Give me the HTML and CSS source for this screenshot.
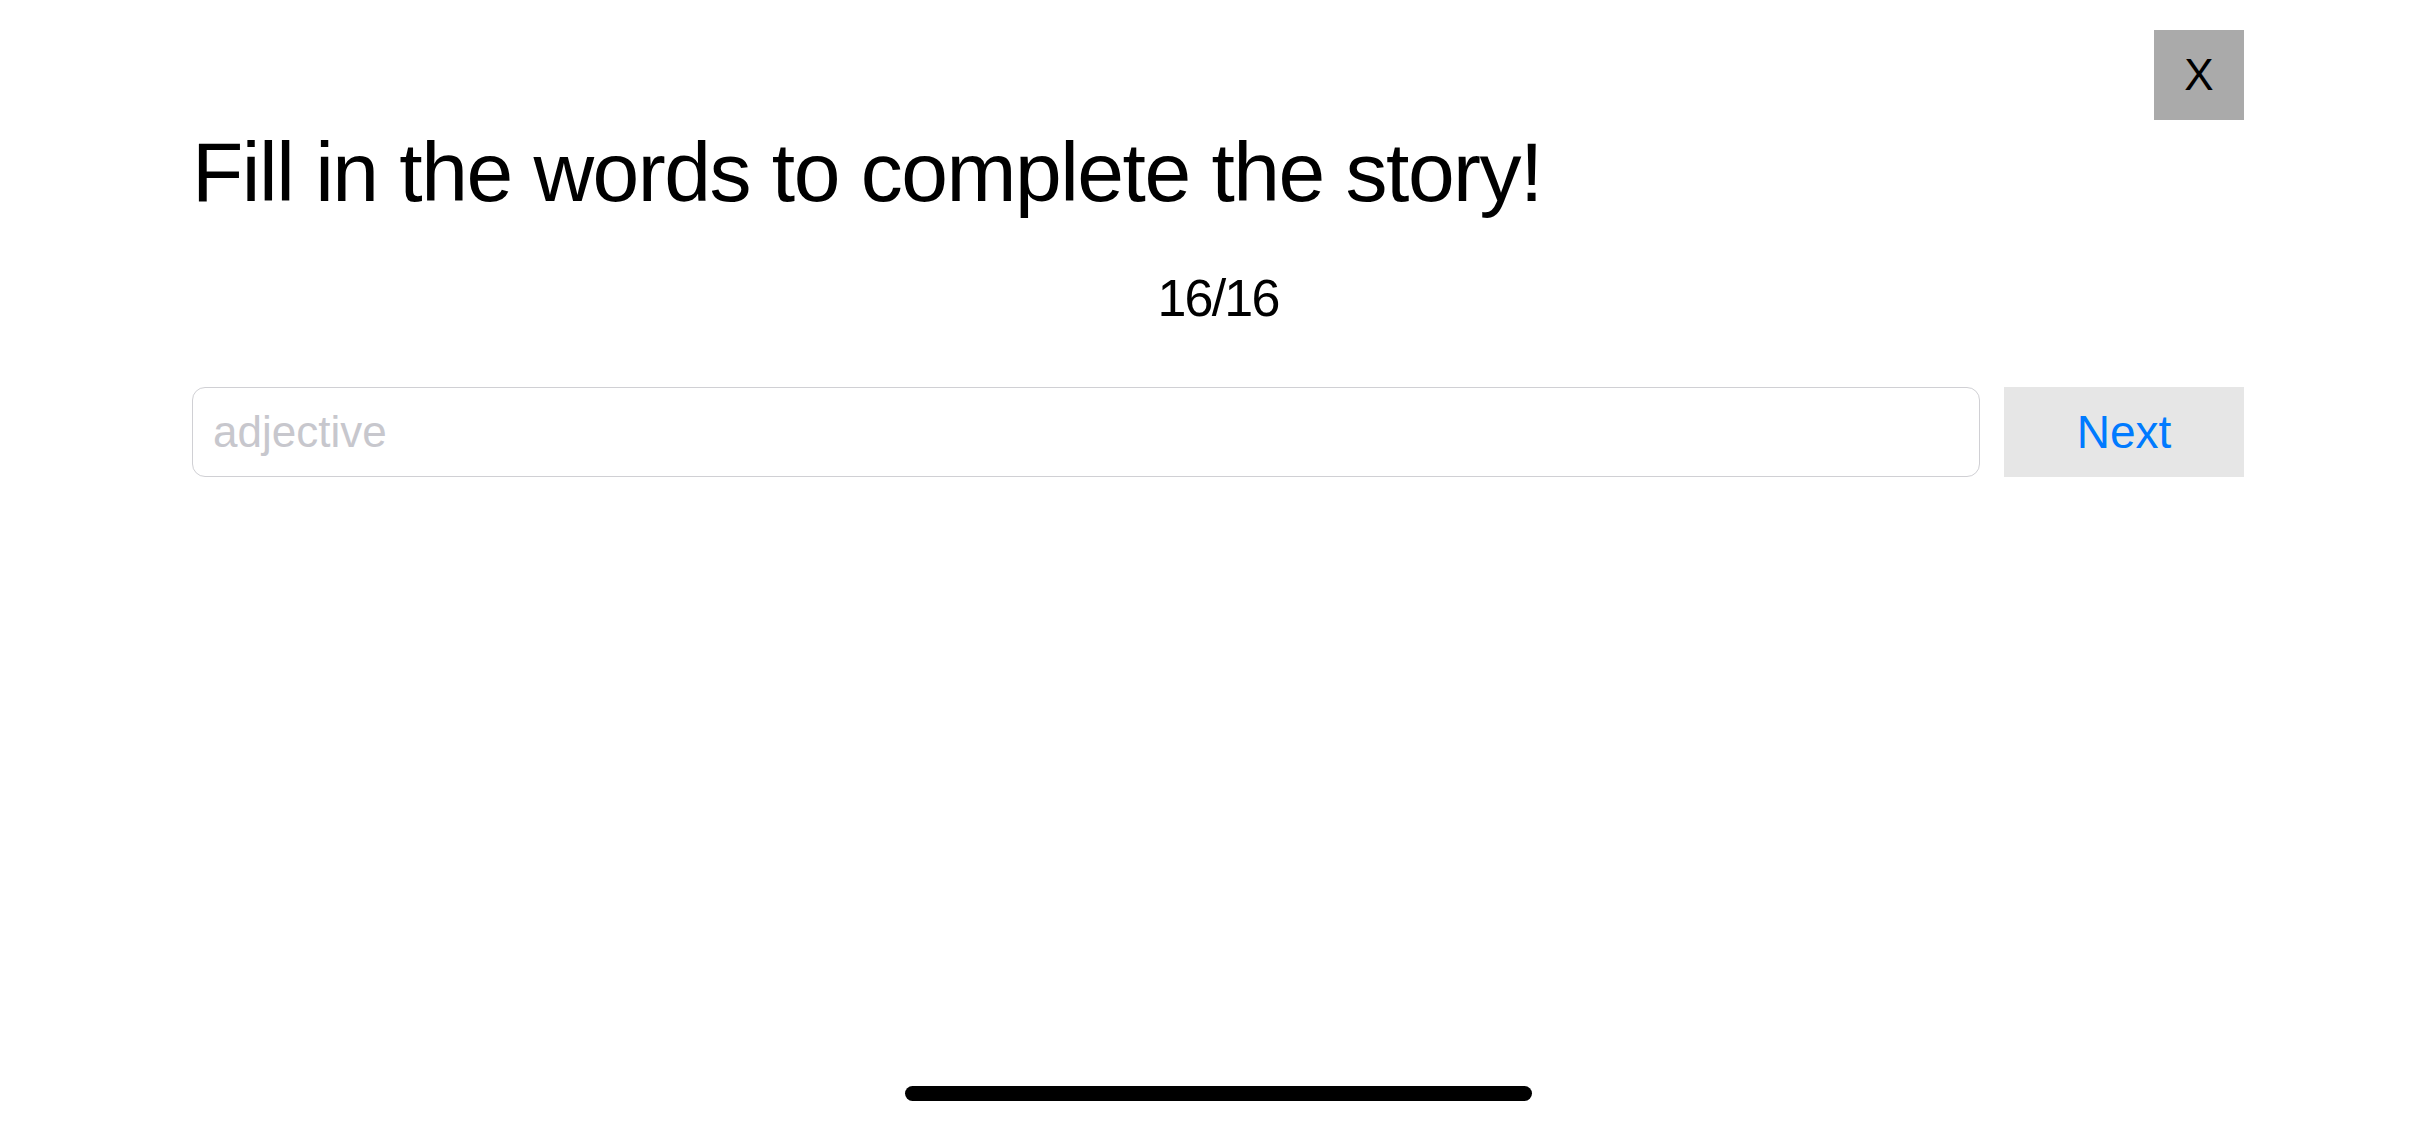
FILE: index.html
```html
<!DOCTYPE html>
<html lang="en">
<head>
<meta charset="utf-8">
<title>Fill in the words</title>
<link rel="stylesheet" href="styles.css">
</head>
<body>
<div class="screen">
  <header class="topbar">
    <button class="close-btn" type="button">X</button>
  </header>
  <h1 class="title">Fill in the words to complete the story!</h1>
  <div class="progress">16/16</div>
  <div class="entry-row">
    <input class="word-input" type="text" placeholder="adjective">
    <button class="next-btn" type="button">Next</button>
  </div>
  <div class="home-indicator"></div>
</div>
</body>
</html>
```
FILE: styles.css
```css
html, body {
  margin: 0;
  padding: 0;
  background: #ffffff;
}

.screen {
  position: relative;
  width: 2436px;
  height: 1125px;
  box-sizing: border-box;
  padding: 0 192px;
  font-family: "Liberation Sans", Arial, sans-serif;
  color: #000000;
  overflow: hidden;
}

.topbar {
  display: flex;
  justify-content: flex-end;
  padding-top: 30px;
  height: 90px;
}

.close-btn {
  width: 90px;
  height: 90px;
  margin: 0;
  padding: 0;
  border: none;
  border-radius: 0;
  background: #aaaaaa;
  color: #000000;
  font-family: "Liberation Sans", Arial, sans-serif;
  font-size: 44px;
  line-height: 90px;
  text-align: center;
}

.title {
  margin: 0;
  font-size: 84px;
  font-weight: 400;
  line-height: 104px;
  letter-spacing: -1.5px;
  white-space: nowrap;
}

.progress {
  margin-top: 44px;
  font-size: 52px;
  line-height: 60px;
  letter-spacing: -1.8px;
  text-align: center;
}

.entry-row {
  display: flex;
  gap: 24px;
  margin-top: 59px;
  height: 90px;
}

.word-input {
  flex: 1;
  min-width: 0;
  height: 90px;
  box-sizing: border-box;
  margin: 0;
  padding: 0 20px;
  border: 1.5px solid #d0d0d4;
  border-radius: 13px;
  background: #ffffff;
  font-family: "Liberation Sans", Arial, sans-serif;
  font-size: 44px;
  color: #000000;
  outline: none;
}

.word-input::placeholder {
  color: #c7c7cd;
}

.next-btn {
  width: 240px;
  height: 90px;
  margin: 0;
  padding: 0;
  border: none;
  border-radius: 0;
  background: #e6e6e6;
  color: #007aff;
  font-family: "Liberation Sans", Arial, sans-serif;
  font-size: 46px;
  line-height: 90px;
  text-align: center;
}

.home-indicator {
  position: absolute;
  left: 905px;
  top: 1086px;
  width: 627px;
  height: 15px;
  border-radius: 7.5px;
  background: #000000;
}
```
